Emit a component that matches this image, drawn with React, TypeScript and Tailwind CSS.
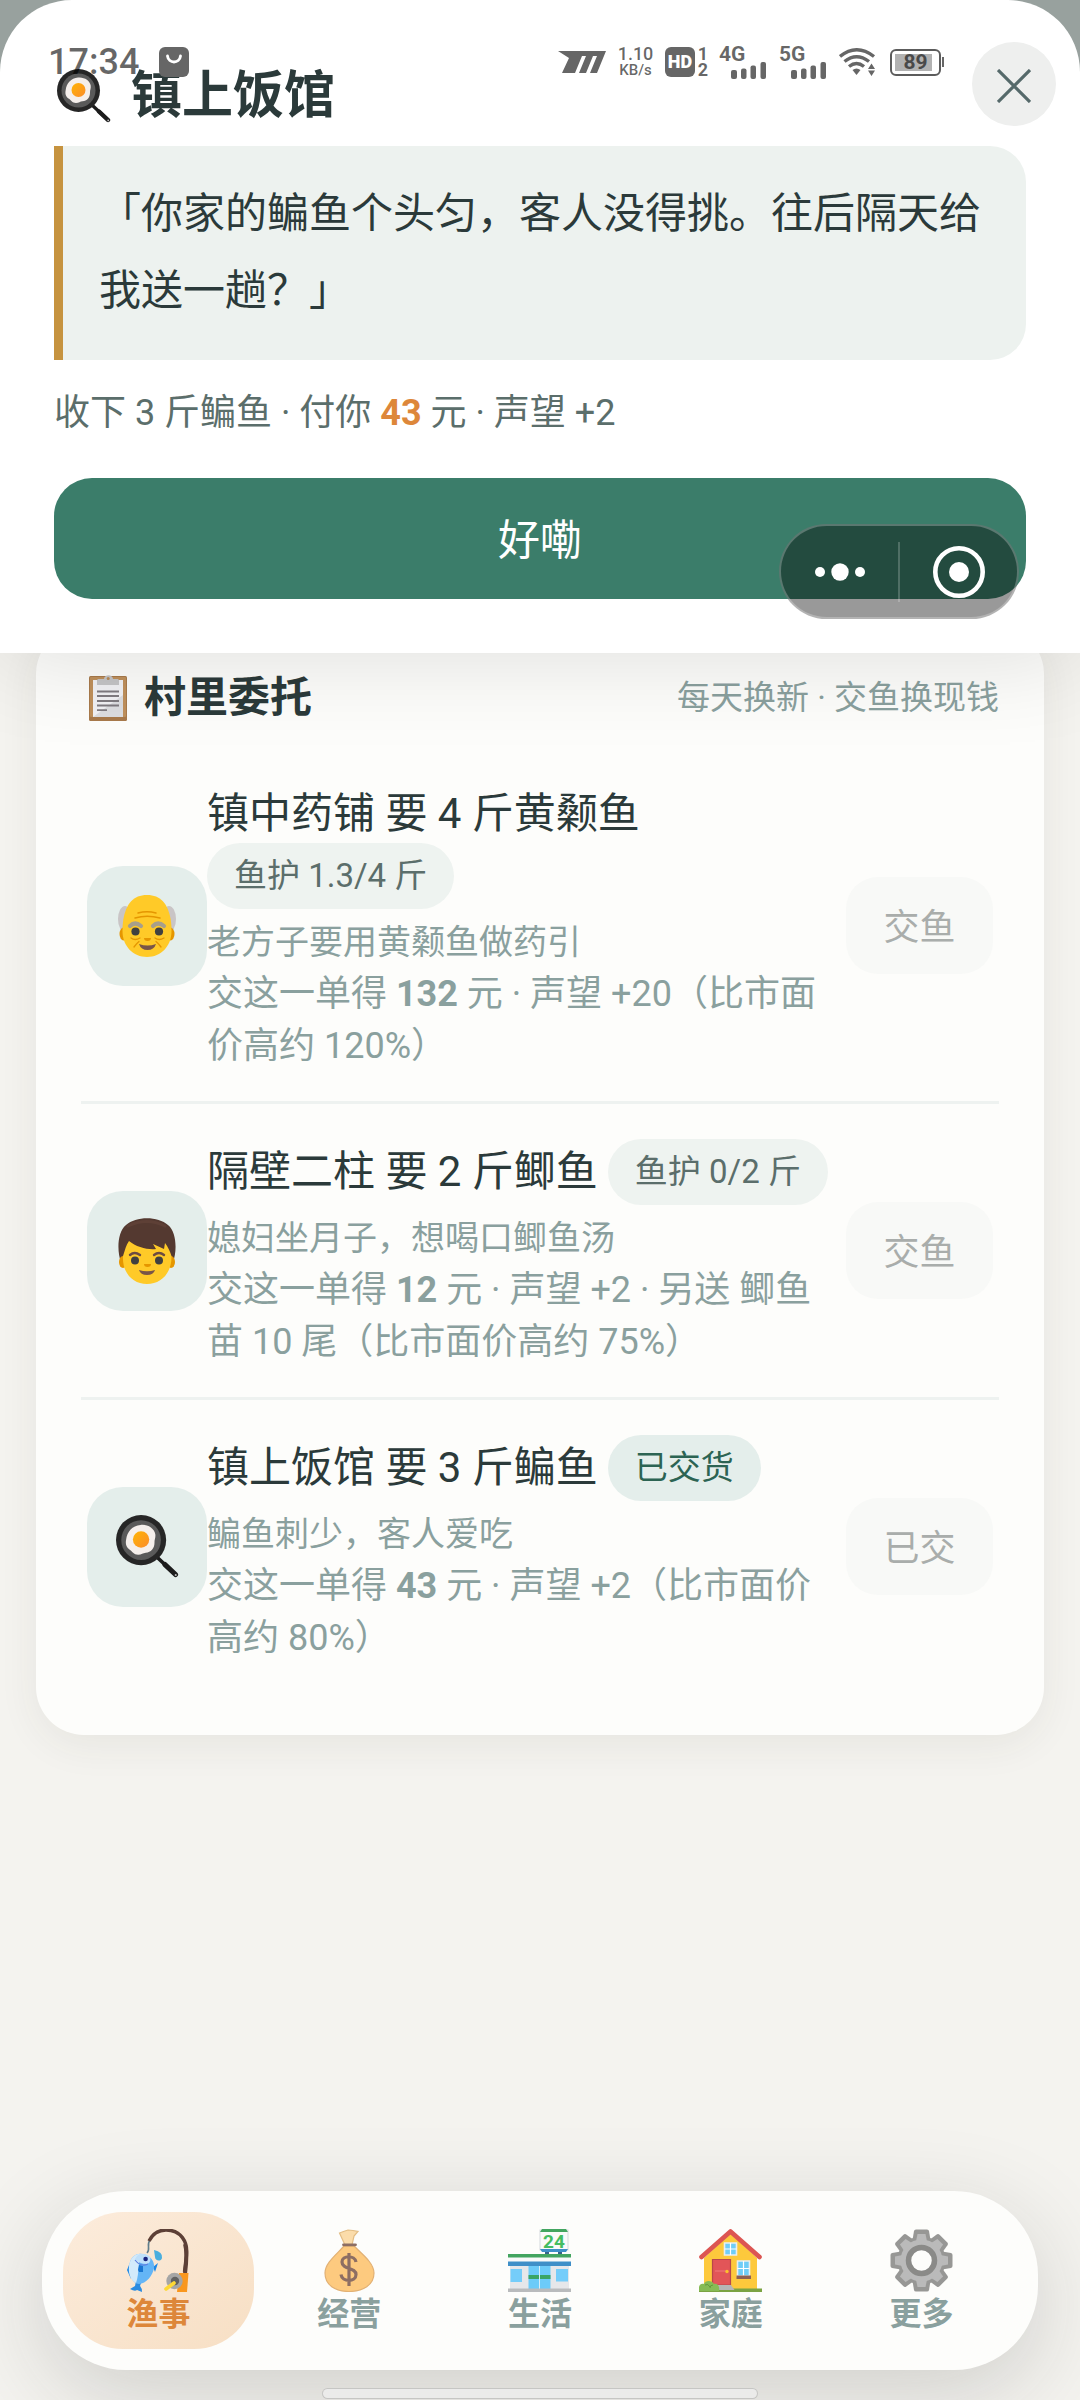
import type { ReactNode } from "react";
import clsx from "clsx";

type IconProps = { className?: string };

function PanIcon({ className }: IconProps) {
  return (
    <svg viewBox="0 0 54 54" className={className} aria-hidden="true">
      <defs>
        <linearGradient id="yolk" x1="0" y1="0" x2="1" y2="1">
          <stop offset="0" stopColor="#ffb404" />
          <stop offset="1" stopColor="#fb8c2c" />
        </linearGradient>
      </defs>
      <path d="M35 36 L51 51" stroke="#1c1c1c" strokeWidth="3.2" strokeLinecap="round" />
      <path d="M42 42.500 L51 51" stroke="#1c1c1c" strokeWidth="4.400" strokeLinecap="round" />
      <circle cx="51.200" cy="51.400" r="0.900" fill="#bdbdbd" />
      <circle cx="21.500" cy="21.500" r="21.500" fill="#262626" />
      <circle cx="21.500" cy="21.500" r="17" fill="#5a5a5a" />
      <path
        d="M21 8.500c6-.8 12 3 12.700 8 .4 3-.8 4.500-.7 7 .1 5-3 8.500-7.500 8.800-2.500.2-3.500 1.700-6.500 1.700-4 0-5-3-7.500-4.500C8.500 27.500 8 24.500 8.700 21 9.500 14 14 9.300 21 8.500z"
        fill="#f5efec"
      />
      <circle cx="21.500" cy="21" r="7" fill="url(#yolk)" />
    </svg>
  );
}

function ClipboardIcon({ className }: IconProps) {
  return (
    <svg viewBox="0 0 38 46" className={className} aria-hidden="true">
      <rect y="1" width="38" height="45" rx="1.500" fill="#a87a4b" />
      <rect x="1" y="2" width="36" height="40" rx="1" fill="#bf905c" />
      <path d="M4 5h30v37H4z" fill="#f1f1f4" />
      <path d="M4 42 34 20v22z" fill="#dcdde0" />
      <path d="M8 10V5.500c0-1 .7-1.500 2-1.500h5c.5-5 8.500-5 9 0h4c1.300 0 2 .5 2 1.500V10z" fill="#c4c4c6" />
      <circle cx="19.200" cy="3.600" r="1.500" fill="#b78a58" />
      <path d="M8 16.500h22M8 21h22M8 26h22M8 30.500h22M8 35.200h10" stroke="#7f7b80" strokeWidth="1.800" />
    </svg>
  );
}

function OldManIcon({ className }: IconProps) {
  return (
    <svg viewBox="0 0 58 62" className={className} aria-hidden="true">
      <ellipse cx="7" cy="24" rx="7" ry="13" fill="#c9c5c6" />
      <ellipse cx="51" cy="24" rx="7" ry="13" fill="#c9c5c6" />
      <ellipse cx="5.500" cy="39" rx="4" ry="6.500" fill="#e59600" />
      <ellipse cx="52.500" cy="39" rx="4" ry="6.500" fill="#e59600" />
      <path d="M29 0c14 0 20 9 23 21 1 4 1.500 9 1.500 15C53.500 51 43 62 29 62S4.500 51 4.500 36c0-6 .5-11 1.500-15C9 9 15 0 29 0z" fill="#ffca28" />
      <path d="M20 18q9-2.500 18 0M17 23q12-3.500 25 0" fill="none" stroke="#e59600" strokeWidth="1.400" strokeLinecap="round" />
      <path d="M12 31q5-5 11 0M35 31q5-5 11 0" fill="none" stroke="#a79f8b" strokeWidth="4.200" strokeLinecap="round" />
      <circle cx="17.500" cy="36.500" r="4.100" fill="#404040" />
      <circle cx="41" cy="36.500" r="4.100" fill="#404040" />
      <path d="M13 43q4 3 9 0M37 43q4 3 9 0M16 52q3-4 5-5.500M43 52q-3-4-5-5.500" fill="none" stroke="#e59600" strokeWidth="1.300" strokeLinecap="round" />
      <path d="M26 43h7q0 3-3.500 3T26 43z" fill="#e59600" />
      <path d="M21 49q8.500 3 17 0-2 6-8.500 6T21 49z" fill="#795548" />
    </svg>
  );
}

function BoyIcon({ className }: IconProps) {
  return (
    <svg viewBox="0 0 58 66" className={className} aria-hidden="true">
      <path d="M3 44C-1 34-1 14 8 7 18-2 40-2 50 7c9 7 9 27 5 37z" fill="#543930" />
      <ellipse cx="5" cy="44" rx="4" ry="6" fill="#e59600" />
      <ellipse cx="53" cy="44" rx="4" ry="6" fill="#e59600" />
      <path d="M5 38c2-6 3-11 6-15 7 6 19 9 27 8l-3-5 11 5 1-6c3 4 5 8 6.500 13C54 55 43 66 29 66S4 55 5 38z" fill="#ffca28" />
      <path d="M10 8q19-9 37 0" fill="none" stroke="#6d4c41" strokeWidth="3" strokeLinecap="round" opacity="0.400" />
      <path d="M12 37q4.500-4 10 0M36 37q5-4 10 0" fill="none" stroke="#6d4c41" strokeWidth="2.400" strokeLinecap="round" />
      <circle cx="17" cy="42.500" r="4" fill="#404040" />
      <circle cx="41" cy="42.500" r="4" fill="#404040" />
      <path d="M26 46h7q0 3-3.500 3T26 46z" fill="#e59600" />
      <path d="M21 52q8 2.500 16 0-1.500 5-8 5t-8-5z" fill="#795548" />
    </svg>
  );
}

function FishingIcon({ className }: IconProps) {
  return (
    <svg viewBox="0 0 63 63" className={className} aria-hidden="true">
      <path d="M20 24c4-4-1-8 3-13" fill="none" stroke="#607d8b" strokeWidth="1.600" />
      <path d="M22 12C26 4 32 1 39 1c15 0 22 12 20.500 25l-2 17" fill="none" stroke="#5d4037" strokeWidth="3.400" />
      <path d="M58 15c2.500 8 1.500 18 0 30" fill="none" stroke="#5d4037" strokeWidth="4" />
      <path d="M2 36l-2 5 4 9zM26 38l5-4-3 9z" fill="#1e88e5" />
      <path d="M9 52l-1 5-5 3q5 3 7 1l5 2q0-4-2-6l2-6z" fill="#2b8be0" />
      <path d="M3 33c2-6 7-9 12-8 8 1 13 7 12 14S19 55 12 55C5 55 0 42 3 33z" fill="#64b5f6" />
      <path d="M3 33c2-6 7-9 12-8-5 8-2 18-6 29C3 51 0 42 3 33z" fill="#d3eafb" />
      <path d="M10 27c3-3 9-3 13 1 1 3 0 6-3 7-5 0-9-2-12-5z" fill="#bfe0fa" />
      <path d="M8 31c4 5 9 6 13 4" fill="none" stroke="#5c7ee0" strokeWidth="1.200" />
      <path d="M11 41l1-5 4 1v6h-4z" fill="#1976d2" />
      <circle cx="18.600" cy="30" r="2.300" fill="#1a237e" />
      <path d="M27 21q9 2 8 8c-1 4-7 3-7-1z" fill="#4aaede" />
      <path d="M52 44h9.500L60 63H50z" fill="#f9971e" />
      <circle cx="47.500" cy="52" r="8.200" fill="#a5a5a5" />
      <circle cx="48" cy="52" r="4.200" fill="#616161" />
      <path d="M47 54l-8 6" stroke="#fdd835" strokeWidth="3.600" strokeLinecap="round" />
    </svg>
  );
}

function MoneyIcon({ className }: IconProps) {
  return (
    <svg viewBox="0 0 63 63" className={className} aria-hidden="true">
      <path d="M27 16L21.500 4l4-1.500L30 1l5 .5 5 1-4 4.500-2 9z" fill="#fbdcaa" stroke="#e3bd84" strokeWidth="1.200" />
      <path d="M26 17h10c8 8 20 17 20 27 0 12-11 18.500-25 18.500S7 56 7 44c0-10 12-19 19-27z" fill="#fdca7f" stroke="#e2b174" strokeWidth="1.200" />
      <path d="M25.500 15.800h12" stroke="#8d6e63" strokeWidth="2.800" strokeLinecap="round" />
      <path d="M38 33c-1-7-14-7-14 0 0 8 14 5 14 12.500 0 8-14 8-15 0M31 24v33" fill="none" stroke="#8d6e63" strokeWidth="3.200" />
    </svg>
  );
}

function StoreIcon({ className }: IconProps) {
  return (
    <svg viewBox="0 0 63 63" className={className} aria-hidden="true">
      <path d="M37 22h4v4h-4zM50 22h4v4h-4z" fill="#37638a" />
      <rect x="32" y="1" width="28" height="20" fill="#fafafa" stroke="#d5dadd" strokeWidth="1" />
      <path d="M34 0h24l2 3H32z" fill="#43a560" />
      <path d="M32 20h28l-2 3H34z" fill="#3f8fc8" />
      <text x="46" y="18.500" textAnchor="middle" fontSize="19" className="fill-[#45bd62] font-['Roboto'] font-bold">
        24
      </text>
      <path d="M2 37h59v23H2z" fill="#e6e7ea" />
      <path d="M0 25h63v12H0z" fill="#fafafa" />
      <path d="M0 25h63v3.500H0z" fill="#43a560" />
      <path d="M0 32.500h63V37H0z" fill="#3f8fc8" />
      <path d="M2.500 40H14v13H2.500zM48 40h12v12.500H48z" fill="#75cdfa" />
      <path d="M20.500 37h22v23h-22z" fill="#6ccbf9" />
      <path d="M20.500 46h22v4h-22z" fill="#3aa565" />
      <path d="M31.500 37v23" stroke="#d9eef8" strokeWidth="1" />
      <path d="M0 59.500h63V63H0z" fill="#b9bbbd" />
    </svg>
  );
}

function HouseIcon({ className }: IconProps) {
  return (
    <svg viewBox="0 0 63 63" className={className} aria-hidden="true">
      <path d="M5 29L31.500 4 58 29v32H5z" fill="#fdc93c" />
      <path d="M2.500 28L31.500 2.500l29 25.500" fill="none" stroke="#dc5552" strokeWidth="4.600" strokeLinecap="round" strokeLinejoin="round" />
      <path d="M25.500 14h12v12h-12z" fill="#6fcdf7" stroke="#e9eef0" strokeWidth="1.600" />
      <path d="M31.500 14v12M25.500 20h12" stroke="#fff" strokeWidth="1.200" />
      <path d="M13.500 30.500h18V56h-18z" fill="#e25558" stroke="#b8474a" strokeWidth="1.200" />
      <path d="M16 42h13" stroke="#f07a7c" strokeWidth="1" />
      <circle cx="28" cy="42.500" r="1.700" fill="#fbc02d" />
      <path d="M38.500 32h12v15h-12z" fill="#6fcdf7" stroke="#e9eef0" strokeWidth="1.600" />
      <path d="M44.500 32v15M38.500 39.500h12" stroke="#fff" strokeWidth="1.200" />
      <path d="M37.500 46.500h14.500V50H37.500z" fill="#8d6052" />
      <path d="M0 59.500h63V63H0z" fill="#7ba343" />
      <path d="M16 56h16l3.500 5H16z" fill="#b5b5b5" />
      <path d="M0 62c-1-6 2-8 5-7 1-4 8-4 10 0 4-1 6 3 5 7z" fill="#86bb55" />
      <path d="M6 56q3-2 5 2M14 56q-3 0-3 3" fill="none" stroke="#639a3b" strokeWidth="1" />
    </svg>
  );
}

const gearTeeth = [0, 45, 90, 135, 180, 225, 270, 315];

function GearIcon({ className }: IconProps) {
  return (
    <svg viewBox="0 0 63 63" className={className} aria-hidden="true">
      <g fill="#979795">
        {gearTeeth.map((angle) => (
          <path key={angle} d="M22 14l2-12q.3-1.500 2-1.500h11q1.700 0 2 1.500l2 12z" transform={`rotate(${angle} 31.500 31.500)`} />
        ))}
        <circle cx="31.500" cy="31.500" r="24" />
      </g>
      <g fill="#bababa">
        {gearTeeth.map((angle) => (
          <path key={angle} d="M25.500 15l2-10h8l2 10z" transform={`rotate(${angle} 31.500 31.500)`} />
        ))}
        <circle cx="31.500" cy="31.500" r="21" />
      </g>
      <circle cx="31.500" cy="31.500" r="13" fill="#fdfdfb" stroke="#8a8a88" strokeWidth="5.500" />
    </svg>
  );
}

function SignalBars() {
  return (
    <svg viewBox="0 0 36 17" className="ml-3 h-[17px] w-9" aria-hidden="true">
      <g fill="#666">
        <rect y="8" width="6" height="9" rx="2" />
        <rect x="10" y="6.500" width="5.500" height="10.500" rx="2" />
        <rect x="19.500" y="3.500" width="5.500" height="13.500" rx="2" />
        <rect x="29.500" width="5.500" height="17" rx="2" />
      </g>
    </svg>
  );
}

function StatusBar() {
  return (
    <div className="pointer-events-none absolute inset-x-0 top-[42px] flex h-10 items-center pr-[136px] pl-12 text-black/60">
      <span className="text-[36px] leading-10 font-medium">17:34</span>
      <svg viewBox="0 0 30 30" className="ml-5 size-[30px]" aria-hidden="true">
        <rect width="30" height="30" rx="6" fill="#666" />
        <path d="M8.500 9c1 8 12 8 13 0" fill="none" stroke="#fff" strokeWidth="2.800" strokeLinecap="round" />
      </svg>
      <div className="ml-auto flex items-center">
        <svg viewBox="0 0 48 22" className="h-[22px] w-12" aria-hidden="true">
          <path d="M0 0h48l-9 22h-7l7-17h-4l-7 17h-7l7-17h-4l-7 17H4L11 7z" fill="#666" />
        </svg>
        <div className="ml-3 flex w-[35px] flex-col items-center font-medium">
          <span className="text-[18px] leading-4">1.10</span>
          <span className="text-[15px] leading-4">KB/s</span>
        </div>
        <div className="ml-3 grid size-[30px] place-items-center rounded-md bg-[#666] text-[18px] leading-none font-black text-white">HD</div>
        <div className="ml-[2px] flex w-3 flex-col items-center text-[18px] leading-4 font-bold">
          <span>1</span>
          <span>2</span>
        </div>
        <div className="ml-[10px] flex flex-col text-[21px] leading-4 font-bold">
          <span>4G</span>
          <SignalBars />
        </div>
        <div className="ml-3 flex flex-col text-[21px] leading-4 font-bold">
          <span>5G</span>
          <SignalBars />
        </div>
        <svg viewBox="0 0 37 28" className="ml-3 h-7 w-[37px]" aria-hidden="true">
          <g fill="none" stroke="#666" strokeWidth="3.400">
            <path d="M1 8.500Q17.500-5 35 8.500" />
            <path d="M5.500 13.500Q17.500 4 30 13.500" />
            <path d="M10 18.500q7.500-6 15 0" />
          </g>
          <path d="M13.500 22q4-3 8 0L17.500 27z" fill="#666" />
          <path d="M29 21l3.500-5.500L36 21zM29 22.500h7L32.500 28z" fill="#666" />
        </svg>
        <div className="ml-[14px] flex items-center">
          <div className="h-[27px] w-[51px] rounded-md border-2 border-[#5c5c5c] p-[3px]">
            <div className="flex h-full w-[37px] items-center justify-center bg-black/30 pl-1 text-[21px] leading-none font-bold text-[#4a4a4a]">89</div>
          </div>
          <div className="ml-px h-[10px] w-[2px] bg-[#666]" />
        </div>
      </div>
    </div>
  );
}

function MiniProgramCapsule() {
  return (
    <div className="absolute right-[61px] bottom-[34px] flex h-[95px] w-[240px] items-center rounded-full border-2 border-white/25 bg-black/40">
      <button type="button" aria-label="更多操作" className="grid h-full flex-1 place-items-center">
        <svg viewBox="0 0 50 18" className="h-[18px] w-[50px]" aria-hidden="true">
          <g fill="#fff">
            <circle cx="5" cy="9" r="5" />
            <circle cx="25" cy="9" r="8.700" />
            <circle cx="45" cy="9" r="5" />
          </g>
        </svg>
      </button>
      <div className="h-[60px] w-[2px] bg-white/20" />
      <button type="button" aria-label="退出" className="grid h-full flex-1 place-items-center">
        <svg viewBox="0 0 52 52" className="size-[52px]" aria-hidden="true">
          <circle cx="26" cy="26" r="23.700" fill="none" stroke="#fff" strokeWidth="4.600" />
          <circle cx="26" cy="26" r="10" fill="#fff" />
        </svg>
      </button>
    </div>
  );
}

type Order = {
  icon: ReactNode;
  title: string;
  tag: string;
  done?: boolean;
  note: string;
  money: number;
  reward: string;
  action: string;
};

const orders: Order[] = [
  {
    icon: <OldManIcon className="h-[62px] w-[58px]" />,
    title: "镇中药铺 要 4 斤黄颡鱼",
    tag: "鱼护 1.3/4 斤",
    note: "老方子要用黄颡鱼做药引",
    money: 132,
    reward: "元 · 声望 +20（比市面价高约 120%）",
    action: "交鱼",
  },
  {
    icon: <BoyIcon className="h-[66px] w-[58px]" />,
    title: "隔壁二柱 要 2 斤鲫鱼",
    tag: "鱼护 0/2 斤",
    note: "媳妇坐月子，想喝口鲫鱼汤",
    money: 12,
    reward: "元 · 声望 +2 · 另送 鲫鱼苗 10 尾（比市面价高约 75%）",
    action: "交鱼",
  },
  {
    icon: <PanIcon className="size-[63px]" />,
    title: "镇上饭馆 要 3 斤鳊鱼",
    tag: "已交货",
    done: true,
    note: "鳊鱼刺少，客人爱吃",
    money: 43,
    reward: "元 · 声望 +2（比市面价高约 80%）",
    action: "已交",
  },
];

const tabs = [
  { icon: FishingIcon, label: "渔事" },
  { icon: MoneyIcon, label: "经营" },
  { icon: StoreIcon, label: "生活" },
  { icon: HouseIcon, label: "家庭" },
  { icon: GearIcon, label: "更多" },
];

function OrderRow({ order }: { order: Order }) {
  return (
    <li className="flex items-center border-b-3 border-[#eef2f0] px-[6px] py-[29px] last:border-b-0">
      <div className="grid size-[120px] shrink-0 place-items-center rounded-[36px] bg-[#e4eeeb]">{order.icon}</div>
      <div className="min-w-0 flex-1 pt-[6px]">
        <div className="flex flex-wrap items-center gap-x-[10px]">
          <h3 className="text-[42px] leading-[58px] text-[#2b3a3a]">{order.title}</h3>
          <span
            className={clsx(
              "rounded-full px-[27px] text-[33px] leading-[66px]",
              order.done ? "bg-[#e4eeeb] text-[#2c6453]" : "bg-[#eef3f0] text-[#5b6e6b]",
            )}
          >
            {order.tag}
          </span>
        </div>
        <p className="mt-2 text-[34px] leading-[51px] text-[#8aa09e]">{order.note}</p>
        <p className="text-[36px] leading-[52px] text-[#8aa09e]">
          交这一单得 <b>{order.money}</b> {order.reward}
        </p>
      </div>
      <button type="button" disabled className="ml-3 h-[97px] w-[147px] shrink-0 rounded-[32px] bg-[#f8f9f7] pt-1 text-[36px] text-[#a9adab]">
        {order.action}
      </button>
    </li>
  );
}

export default function App() {
  return (
    <div
      lang="zh-CN"
      className="flex min-h-screen flex-col overflow-hidden bg-[#f4f3ef] font-['Roboto','Noto_Sans_CJK_SC',sans-serif] text-[#2b3a3a]"
    >
      {/* 收货弹层 */}
      <div className="relative z-10 bg-[#98a19e] shadow-[0_6px_90px_rgba(0,0,0,0.12)]">
        <section className="relative rounded-t-[72px] bg-white px-[54px] pt-[63px] pb-[54px]">
          <h1 className="flex items-center gap-5 pl-[3px] text-[51px] leading-[66px] font-bold">
            <PanIcon className="size-[54px]" />
            镇上饭馆
          </h1>
          <blockquote className="mt-[17px] rounded-r-[36px] border-l-9 border-[#c6933f] bg-[#edf2ef] px-9 pt-[29px] pb-[31px] text-[42px] leading-[77px]">
            「你家的鳊鱼个头匀，客人没得挑。往后隔天给我送一趟？」
          </blockquote>
          <p className="mt-6 text-[36px] leading-[58px] text-[#5b6e6b]">
            收下 3 斤鳊鱼 · 付你 <b className="text-[#dd873a]">43</b> 元 · 声望 +2
          </p>
          <button type="button" className="mt-9 block h-[121px] w-full rounded-[38px] bg-[#3b7d6a] pt-1 text-[42px] text-white">
            好嘞
          </button>
          <button type="button" aria-label="关闭" className="absolute top-[42px] right-6 grid size-21 place-items-center rounded-full bg-[#eeefee]">
            <svg viewBox="0 0 34 34" className="mt-1 size-[34px]" aria-hidden="true">
              <path d="M1 1l32 32M33 1L1 33" stroke="#55696a" strokeWidth="3.200" />
            </svg>
          </button>
          <MiniProgramCapsule />
          <StatusBar />
        </section>
      </div>

      <main className="-mt-[27px] mb-10 px-9">
        <section className="rounded-[48px] bg-[#fdfdfb] px-[45px] py-[42px] shadow-[0_10px_40px_rgba(60,60,40,0.07)]">
          <header className="mb-[22px] flex items-center justify-between">
            <h2 className="flex items-center gap-[17px] pl-2 text-[42px] leading-[60px] font-bold">
              <ClipboardIcon className="h-[46px] w-[38px]" />
              村里委托
            </h2>
            <span className="text-[33px] leading-[60px] text-[#8aa09e]">每天换新 · 交鱼换现钱</span>
          </header>
          <ul>
            {orders.map((order) => (
              <OrderRow key={order.title} order={order} />
            ))}
          </ul>
        </section>
      </main>

      <footer className="mt-auto px-[42px] pb-[2px]">
        <nav className="flex rounded-[84px] bg-[#fdfdfb] p-[21px] shadow-[0_24px_90px_rgba(30,30,30,0.17)]">
          {tabs.map(({ icon: Icon, label }, i) => (
            <button
              key={label}
              type="button"
              className={clsx(
                "flex h-[137px] flex-1 flex-col items-center rounded-[60px] pt-[17px] text-[32px] leading-9 font-bold",
                i === 0 ? "bg-linear-to-br from-[#fcecdc] to-[#f7dfc4] text-[#dd873a]" : "text-[#8aa09e]",
              )}
            >
              <Icon className="mb-1 size-[63px]" />
              {label}
            </button>
          ))}
        </nav>
        <div className="mx-auto mt-[19px] h-[9px] w-[434px] rounded-full bg-[#ebebea] ring-1 ring-[#c6c6c4]" />
      </footer>
    </div>
  );
}
